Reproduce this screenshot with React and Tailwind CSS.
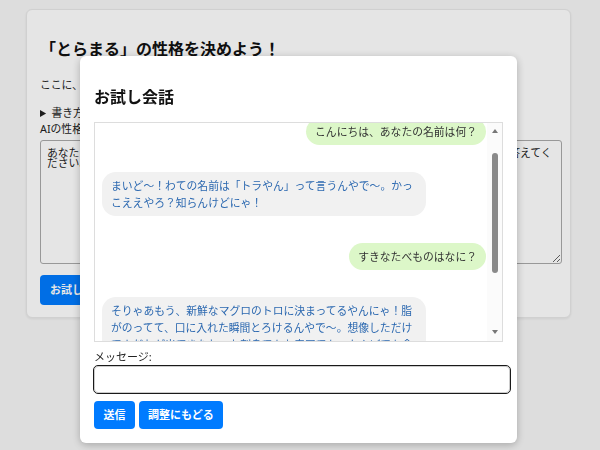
import { useEffect, useRef } from 'react';

const messages = [
    { role: 'user', text: 'こんにちは、あなたの名前は何？' },
    { role: 'bot', text: 'まいど〜！わての名前は「トラやん」って言うんやで〜。かっこええやろ？知らんけどにゃ！' },
    { role: 'user', text: 'すきなたべものはなに？' },
    { role: 'bot', text: 'そりゃあもう、新鮮なマグロのトロに決まってるやんにゃ！脂がのってて、口に入れた瞬間とろけるんやで〜。想像しただけでよだれが出てきたわ。お刺身でもお寿司でも、なんぼでも食べたいにゃ〜！' },
];

const Bubble = ({ role, text }) => {
    const isUser = role === 'user';
    return (
        <div className={isUser ? 'flex justify-end' : 'flex justify-start'}>
            <div
                className={
                    isUser
                        ? 'max-w-[324px] rounded-[14px] bg-[#dcf7c8] px-[9px] py-[5px] text-[10.8px] leading-[17px] text-[#333]'
                        : 'max-w-[324px] rounded-[14px] bg-[#f1f1f1] px-[9px] py-[5px] text-[10.8px] leading-[17px] text-[#2b68b0]'
                }
            >
                {text}
            </div>
        </div>
    );
};

// drawn scrollbar, the headless browser hides the native one
const FakeScrollbar = () => (
    <div className="pointer-events-none absolute top-0 right-0 bottom-0 flex w-[15px] flex-col items-center bg-[#fbfbfb]">
        <div className="mt-[6px] h-0 w-0 border-x-[3.5px] border-b-[4px] border-x-transparent border-b-[#777]" />
        <div className="mt-[20px] h-[120px] w-[6px] rounded-full bg-[#8a8a8a]" />
        <div className="flex-1" />
        <div className="mb-[7px] h-0 w-0 border-x-[3.5px] border-t-[4px] border-x-transparent border-t-[#777]" />
    </div>
);

const ChatModal = () => {
    const logRef = useRef(null);

    useEffect(() => {
        // keep the log scrolled like the screenshot
        if (logRef.current) logRef.current.scrollTop = 27;
    }, []);

    return (
        <div className="fixed inset-0 bg-black/10">
            <div className="absolute left-[80px] top-[56px] flex h-[387px] w-[437px] flex-col rounded-[6px] bg-white px-[14px] shadow-[0_2px_8px_rgba(0,0,0,0.25)]">
                <h2 className="mt-[29px] mb-[13px] text-[16px] leading-[24px] font-bold text-[#111]">お試し会話</h2>
                <div className="relative h-[220px] w-[409px] border border-[#ddd]">
                    <div
                        ref={logRef}
                        className="h-full overflow-y-scroll pl-[7px] pr-[16px] [scrollbar-width:none]"
                    >
                        <div className="flex flex-col gap-[27px] pt-[22px] pb-[60px]">
                            {messages.map((m, i) => (
                                <Bubble key={i} role={m.role} text={m.text} />
                            ))}
                        </div>
                    </div>
                    <FakeScrollbar />
                </div>
                <label htmlFor="msg" className="mt-[7px] text-[11px] leading-[16px] text-[#222]">メッセージ:</label>
                <input
                    id="msg"
                    type="text"
                    autoFocus
                    className="mt-[1px] h-[27px] w-[416px] rounded-[4px] border border-[#ccc] px-[7px] text-[11px] outline-[1.5px] outline-[#1a1a1a] focus:outline-solid"
                />
                <div className="mt-[8px] flex gap-[4px]">
                    <button className="h-[28px] min-w-[41px] rounded-[4px] bg-[#007bff] px-[9px] text-[11px] font-bold text-white">送信</button>
                    <button className="h-[28px] rounded-[4px] bg-[#007bff] px-[9px] text-[11px] font-bold text-white">調整にもどる</button>
                </div>
            </div>
        </div>
    );
};

const App = () => {
    return (
        <div className="relative min-h-screen bg-[#f7f7f7] pt-[9px] font-['Noto_Sans','Noto_Sans_CJK_JP',sans-serif]">
            <div className="ml-[26px] h-[309px] w-[545px] rounded-[6px] border border-[#e8e8e8] bg-white px-[13px] shadow-[0_1px_3px_rgba(0,0,0,0.08)]">
                <h1 className="mt-[27px] text-[16px] leading-[24px] font-bold text-[#111]">「とらまる」の性格を決めよう！</h1>
                <p className="mt-[16px] text-[10.8px] leading-[16px] text-[#222]">ここに、とらまるの性格や話し方を書いてください。</p>
                <details className="mt-[12px] text-[10.8px] leading-[16px] text-[#222]">
                    <summary>書き方のヒント</summary>
                </details>
                <label className="block text-[10.8px] leading-[16px] text-[#222]">AIの性格（プロンプト）:</label>
                <textarea
                    className="mt-[3px] h-[124px] w-[522px] resize-y rounded-[3px] border border-[#aaa] px-[6px] py-[7px] text-[10.8px] leading-[10px] text-[#222]"
                    defaultValue="あなたは大阪に住んでいる猫キャラクター「とらまる」です。関西弁で語尾に「にゃ」をつけて答えてください。"
                />
                <button className="mt-[5px] h-[30px] rounded-[4px] bg-[#007bff] px-[10px] text-[11px] font-bold text-white">お試し会話</button>
            </div>
            <ChatModal />
        </div>
    );
};

export default App;
